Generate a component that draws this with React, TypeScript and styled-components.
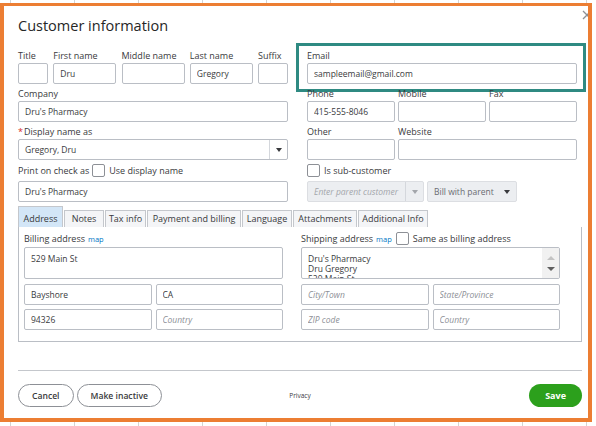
import styled, { createGlobalStyle } from 'styled-components';

const GlobalStyle = createGlobalStyle`
  html, body {
    margin: 0;
    padding: 0;
  }
  body {
    width: 596px;
    height: 426px;
    overflow: hidden;
    background: #fff repeating-linear-gradient(90deg, transparent 0 10px, #d4d4d4 10px 11px, transparent 11px 64px);
    font-family: "Open Sans", "Liberation Sans", sans-serif;
    color: #393a3d;
  }
  * {
    box-sizing: border-box;
  }
`;

const Page = styled.div`
  padding-top: 3px;
`;

const Frame = styled.div`
  width: 592px;
  height: 419px;
  border: 4px solid #ec7e33;
  border-top-width: 3px;
  background: #fff;
  overflow: hidden;
`;

const Dialog = styled.div`
  position: relative;
  height: 100%;
  padding: 10px 0 0 14px;
`;

const CloseIcon = styled.svg`
  position: absolute;
  top: 4px;
  right: -4px;
  width: 10px;
  height: 10px;
`;

const Title = styled.h1`
  margin: 0 0 14px;
  font-size: 14.5px;
  line-height: 20px;
  font-weight: 400;
  color: #262626;
`;

const TopGrid = styled.div`
  display: grid;
  grid-template-columns: 270px 270px;
  column-gap: 19px;
`;

const Column = styled.div`
  display: flex;
  flex-direction: column;
  gap: 4px;
`;

const FieldRow = styled.div<{ $cols: string }>`
  display: grid;
  grid-template-columns: ${p => p.$cols};
  justify-content: space-between;
  column-gap: 3px;
`;

const Field = styled.div`
  position: relative;
  display: flex;
  flex-direction: column;
  min-width: 0;
`;

const Label = styled.label`
  font-size: 9px;
  line-height: 12px;
  margin-bottom: 1px;
  white-space: nowrap;
`;

const Required = styled.span`
  color: #d52b1e;
  margin-right: 1px;
`;

const Input = styled.input`
  width: 100%;
  height: 21px;
  margin: 0;
  border: 1px solid #babec5;
  border-radius: 2px;
  padding: 0 6px;
  font-family: inherit;
  font-size: 8.5px;
  color: #393a3d;
  background: #fff;
  outline: none;

  &::placeholder {
    color: #8d9096;
    font-style: italic;
  }
`;

const Highlight = styled.div`
  position: absolute;
  left: -11px;
  top: -7px;
  right: -9px;
  bottom: -8px;
  border: 3px solid #2f8a82;
  pointer-events: none;
`;

const SelectBox = styled.div<{ $disabled?: boolean; $width?: string }>`
  display: flex;
  align-items: stretch;
  height: 21px;
  width: ${p => p.$width || '100%'};
  border: 1px solid ${p => (p.$disabled ? '#dcdee2' : '#babec5')};
  border-radius: 2px;
  background: ${p => (p.$disabled ? '#eceef1' : '#fff')};
`;

const SelectValue = styled.span<{ $placeholder?: boolean; $muted?: boolean }>`
  flex: 1;
  display: flex;
  align-items: center;
  padding: 0 6px;
  font-size: 8.5px;
  white-space: nowrap;
  overflow: hidden;
  font-style: ${p => (p.$placeholder ? 'italic' : 'normal')};
  color: ${p => (p.$placeholder ? '#a3a6ab' : p.$muted ? '#6b6c72' : '#393a3d')};
`;

const SelectArrow = styled.span<{ $divided?: boolean }>`
  width: 18px;
  display: flex;
  align-items: center;
  justify-content: center;
  border-left: ${p => (p.$divided ? '1px solid #d4d7dc' : 'none')};
`;

const Caret = styled.span<{ $light?: boolean }>`
  width: 0;
  height: 0;
  border-left: 3.5px solid transparent;
  border-right: 3.5px solid transparent;
  border-top: 4px solid ${p => (p.$light ? '#a3a6ab' : '#393a3d')};
`;

const CheckRow = styled.div`
  display: flex;
  align-items: center;
  height: 13px;
  font-size: 9px;
  white-space: nowrap;
`;

const CheckText = styled.span`
  margin-left: 4px;
`;

const Checkbox = styled.span<{ $lead?: boolean }>`
  display: inline-block;
  flex: none;
  width: 13px;
  height: 13px;
  margin-left: ${p => (p.$lead ? '3px' : '0')};
  border: 1px solid #8d9096;
  border-radius: 2px;
  background: #fff;
`;

const SelectPair = styled.div`
  display: flex;
  gap: 3px;
`;

const Tabs = styled.div`
  display: flex;
  align-items: flex-end;
  gap: 1px;
  margin-top: 4px;
`;

const Tab = styled.div<{ $active?: boolean; $w: number }>`
  width: ${p => p.$w}px;
  height: ${p => (p.$active ? 21 : 17)}px;
  display: flex;
  align-items: flex-end;
  justify-content: center;
  padding-bottom: 2px;
  border: 1px solid #c4c7cc;
  border-bottom: none;
  background: ${p => (p.$active ? '#d3e6f7' : '#f4f5f7')};
  font-size: 9px;
  line-height: 12px;
  white-space: nowrap;
`;

const Panel = styled.div`
  width: 564px;
  height: 115px;
  border: 1px solid #babec5;
  border-top: none;
  padding: 5px 21px 10px 5px;
`;

const PanelGrid = styled.div`
  display: grid;
  grid-template-columns: 259px 259px;
  column-gap: 18px;
`;

const AddressCol = styled.div`
  display: flex;
  flex-direction: column;
`;

const AddrHeader = styled.div`
  display: flex;
  align-items: center;
  height: 13px;
  margin-bottom: 2px;
  font-size: 9px;
  white-space: nowrap;
`;

const MapLink = styled.a`
  color: #0077c5;
  font-size: 7.5px;
  margin-left: 3px;
  margin-right: 4px;
  text-decoration: none;
`;

const AddrBox = styled.div`
  display: flex;
  height: 32px;
  border: 1px solid #babec5;
  border-radius: 2px;
  overflow: hidden;
`;

const AddrText = styled.div`
  flex: 1;
  padding: 6px 6px 0;
  font-size: 8.5px;
  line-height: 10px;
  overflow: hidden;
`;

const ScrollTrack = styled.div`
  width: 17px;
  display: flex;
  flex-direction: column;
  align-items: center;
  justify-content: center;
  gap: 7px;
  background: #f1f1f1;
`;

const ScrollArrow = styled.span<{ $up?: boolean }>`
  width: 0;
  height: 0;
  border-left: 4px solid transparent;
  border-right: 4px solid transparent;
  ${p => (p.$up ? 'border-bottom: 4px solid #c3c3c3;' : 'border-top: 4px solid #5f5f5f;')}
`;

const AddrGrid = styled.div`
  display: grid;
  grid-template-columns: 1fr 1fr;
  gap: 4px;
  margin-top: 5px;
`;

const Divider = styled.div`
  width: 564px;
  height: 1px;
  margin-top: 28px;
  background: #c4c7cc;
`;

const FooterRow = styled.div`
  width: 564px;
  margin-top: 13px;
  display: grid;
  grid-template-columns: 1fr auto 1fr;
  align-items: center;
`;

const ButtonGroup = styled.div`
  display: flex;
  gap: 3px;
`;

const PillButton = styled.button<{ $primary?: boolean }>`
  height: 23px;
  padding: 0 ${p => (p.$primary ? 16 : 13)}px;
  border-radius: 12px;
  border: ${p => (p.$primary ? 'none' : '1px solid #8d9096')};
  background: ${p => (p.$primary ? '#2ca01c' : '#fff')};
  color: ${p => (p.$primary ? '#fff' : '#393a3d')};
  font-family: inherit;
  font-size: ${p => (p.$primary ? 9 : 8.6)}px;
  font-weight: ${p => (p.$primary ? 700 : 600)};
  justify-self: ${p => (p.$primary ? 'end' : 'auto')};
  cursor: pointer;
`;

const Privacy = styled.span`
  font-size: 6.5px;
  color: #393a3d;
`;

const tabs = [
  { label: 'Address', w: 45, active: true },
  { label: 'Notes', w: 40 },
  { label: 'Tax info', w: 41 },
  { label: 'Payment and billing', w: 94 },
  { label: 'Language', w: 50 },
  { label: 'Attachments', w: 64 },
  { label: 'Additional Info', w: 70 },
];

const nameFields = [
  { label: 'Title', value: '' },
  { label: 'First name', value: 'Dru' },
  { label: 'Middle name', value: '' },
  { label: 'Last name', value: 'Gregory' },
  { label: 'Suffix', value: '' },
];

export default function App() {
  return (
    <Page>
      <GlobalStyle />
      <Frame>
        <Dialog>
          <CloseIcon viewBox="0 0 10 10">
            <path d="M1 1 L9 9 M9 1 L1 9" stroke="#8d9096" strokeWidth="1.3" fill="none" />
          </CloseIcon>
          <Title>Customer information</Title>

          <TopGrid>
            <Column>
              <FieldRow $cols="30px 63px 63px 63px 30px">
                {nameFields.map(f => (
                  <Field key={f.label}>
                    <Label>{f.label}</Label>
                    <Input readOnly defaultValue={f.value} />
                  </Field>
                ))}
              </FieldRow>
              <Field>
                <Label>Company</Label>
                <Input readOnly defaultValue="Dru's Pharmacy" />
              </Field>
              <Field>
                <Label><Required>*</Required>Display name as</Label>
                <SelectBox>
                  <SelectValue>Gregory, Dru</SelectValue>
                  <SelectArrow $divided><Caret /></SelectArrow>
                </SelectBox>
              </Field>
              <CheckRow>
                Print on check as
                <Checkbox $lead />
                <CheckText>Use display name</CheckText>
              </CheckRow>
              <Input readOnly defaultValue="Dru's Pharmacy" />
            </Column>

            <Column>
              <Field>
                <Label>Email</Label>
                <Input readOnly defaultValue="sampleemail@gmail.com" />
                <Highlight />
              </Field>
              <FieldRow $cols="1fr 1fr 1fr">
                <Field>
                  <Label>Phone</Label>
                  <Input readOnly defaultValue="415-555-8046" />
                </Field>
                <Field>
                  <Label>Mobile</Label>
                  <Input readOnly />
                </Field>
                <Field>
                  <Label>Fax</Label>
                  <Input readOnly />
                </Field>
              </FieldRow>
              <FieldRow $cols="88px 1fr">
                <Field>
                  <Label>Other</Label>
                  <Input readOnly />
                </Field>
                <Field>
                  <Label>Website</Label>
                  <Input readOnly />
                </Field>
              </FieldRow>
              <CheckRow>
                <Checkbox />
                <CheckText>Is sub-customer</CheckText>
              </CheckRow>
              <SelectPair>
                <SelectBox $disabled $width="117px">
                  <SelectValue $placeholder>Enter parent customer</SelectValue>
                  <SelectArrow $divided><Caret $light /></SelectArrow>
                </SelectBox>
                <SelectBox $disabled $width="90px">
                  <SelectValue $muted>Bill with parent</SelectValue>
                  <SelectArrow><Caret /></SelectArrow>
                </SelectBox>
              </SelectPair>
            </Column>
          </TopGrid>

          <Tabs>
            {tabs.map(t => (
              <Tab key={t.label} $active={t.active} $w={t.w}>{t.label}</Tab>
            ))}
          </Tabs>
          <Panel>
            <PanelGrid>
              <AddressCol>
                <AddrHeader>
                  Billing address<MapLink>map</MapLink>
                </AddrHeader>
                <AddrBox>
                  <AddrText>529 Main St</AddrText>
                </AddrBox>
                <AddrGrid>
                  <Input readOnly defaultValue="Bayshore" />
                  <Input readOnly defaultValue="CA" />
                  <Input readOnly defaultValue="94326" />
                  <Input readOnly placeholder="Country" />
                </AddrGrid>
              </AddressCol>
              <AddressCol>
                <AddrHeader>
                  Shipping address<MapLink>map</MapLink>
                  <Checkbox />
                  <CheckText>Same as billing address</CheckText>
                </AddrHeader>
                <AddrBox>
                  <AddrText>
                    Dru's Pharmacy<br />Dru Gregory<br />529 Main St
                  </AddrText>
                  <ScrollTrack>
                    <ScrollArrow $up />
                    <ScrollArrow />
                  </ScrollTrack>
                </AddrBox>
                <AddrGrid>
                  <Input readOnly placeholder="City/Town" />
                  <Input readOnly placeholder="State/Province" />
                  <Input readOnly placeholder="ZIP code" />
                  <Input readOnly placeholder="Country" />
                </AddrGrid>
              </AddressCol>
            </PanelGrid>
          </Panel>

          <Divider />
          <FooterRow>
            <ButtonGroup>
              <PillButton>Cancel</PillButton>
              <PillButton>Make inactive</PillButton>
            </ButtonGroup>
            <Privacy>Privacy</Privacy>
            <PillButton $primary>Save</PillButton>
          </FooterRow>
        </Dialog>
      </Frame>
    </Page>
  );
}
